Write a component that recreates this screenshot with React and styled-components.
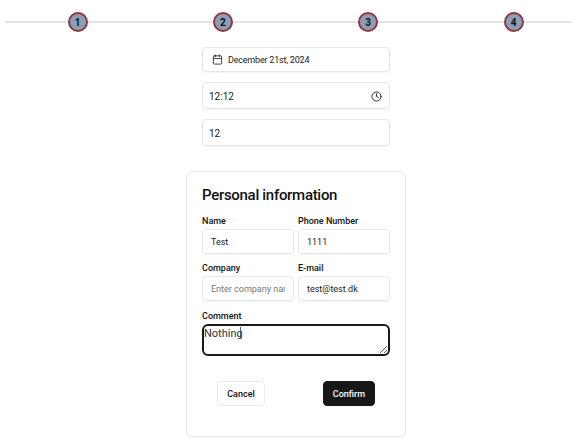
import React from 'react';
import styled, { createGlobalStyle } from 'styled-components';
import { Calendar, Clock } from 'lucide-react';

const GlobalStyle = createGlobalStyle`
  html, body {
    margin: 0;
    padding: 0;
    background: #ffffff;
    font-family: Roboto, "Open Sans", sans-serif;
    color: #111111;
  }
  * {
    box-sizing: border-box;
  }
`;

const Page = styled.div`
  width: 578px;
  height: 444px;
  overflow: hidden;
  padding-top: 12px;
`;

const Stepper = styled.div`
  position: relative;
  display: grid;
  grid-template-columns: repeat(4, 145.3px);
  align-items: center;
  width: 567px;
  margin-left: 5px;
  height: 20px;

  &::before {
    content: '';
    position: absolute;
    left: 0;
    right: 0;
    top: 9px;
    height: 2px;
    background: #e2e2e8;
  }
`;

const Step = styled.div`
  position: relative;
  justify-self: center;
  width: 20px;
  height: 20px;
  border-radius: 50%;
  background: #8d9db6;
  border: 2px solid #8c3a3f;
  display: flex;
  align-items: center;
  justify-content: center;
  font-size: 10px;
  font-weight: 700;
  color: #111111;
`;

const Fields = styled.div`
  width: 188px;
  margin: 15px 0 0 202px;
  display: flex;
  flex-direction: column;
  gap: 10px;
`;

const DateButton = styled.button`
  height: 25px;
  display: flex;
  align-items: center;
  gap: 5px;
  padding: 0 9px;
  background: #ffffff;
  border: 1px solid #e7e7ea;
  border-radius: 4px;
  box-shadow: 0 1px 1px rgba(0, 0, 0, 0.04);
  font-family: inherit;
  font-size: 9px;
  letter-spacing: -0.2px;
  color: #222222;
`;

const TimeField = styled.div`
  height: 27px;
  display: flex;
  align-items: center;
  justify-content: space-between;
  padding: 1px 7px 0 6px;
  border: 1px solid #e7e7ea;
  border-radius: 4px;
  box-shadow: 0 1px 1px rgba(0, 0, 0, 0.04);
  color: #222222;
`;

const Input = styled.input`
  width: 100%;
  height: ${props => props.$height || 25}px;
  padding: 1px ${props => props.$pad || 8}px 0;
  border: 1px solid #e7e7ea;
  border-radius: 4px;
  box-shadow: 0 1px 1px rgba(0, 0, 0, 0.04);
  background: #ffffff;
  font-family: inherit;
  font-size: ${props => props.$size || 9}px;
  color: #222222;
  outline: none;

  &::placeholder {
    color: #777777;
  }
`;

const BareInput = styled.input`
  width: 100px;
  border: none;
  outline: none;
  padding: 0;
  font-family: inherit;
  font-size: 10px;
  color: #222222;
`;

const Card = styled.div`
  width: 220px;
  height: 266px;
  margin: 25px 0 0 186px;
  padding: 13px 15px 0;
  border: 1px solid #e8e8eb;
  border-radius: 6px;
  box-shadow: 0 1px 2px rgba(0, 0, 0, 0.05);
`;

const Title = styled.h2`
  margin: 0 0 9px;
  font-size: 15px;
  line-height: 20px;
  font-weight: 500;
  letter-spacing: -0.3px;
  color: #111111;
`;

const FormGrid = styled.div`
  display: grid;
  grid-template-columns: 92px 92px;
  column-gap: 4px;
  row-gap: 7px;
`;

const Group = styled.div`
  position: relative;
  display: flex;
  flex-direction: column;
  grid-column: ${props => (props.$wide ? '1 / -1' : 'auto')};
  margin-top: ${props => (props.$wide ? 1 : 0)}px;
`;

const Label = styled.label`
  font-size: 9px;
  line-height: 15px;
  font-weight: 500;
  color: #111111;
`;

const TextArea = styled.textarea`
  width: 100%;
  height: 32px;
  padding: 1px 0 0;
  border: 2px solid #1a1a1a;
  border-radius: 6px;
  background: #ffffff;
  font-family: inherit;
  font-size: 11px;
  line-height: 13px;
  color: #333333;
  outline: none;
`;

const Caret = styled.span`
  position: absolute;
  left: 38px;
  top: 18px;
  width: 1px;
  height: 12px;
  background: #555555;
`;

const Actions = styled.div`
  display: flex;
  justify-content: space-between;
  margin-top: 25px;
  padding: 0 15px;
`;

const Button = styled.button`
  height: 25px;
  width: ${props => (props.$primary ? 52 : 48)}px;
  border-radius: 4px;
  font-family: inherit;
  font-size: 9px;
  font-weight: 500;
  border: 1px solid ${props => (props.$primary ? '#171717' : '#eaeaec')};
  background: ${props => (props.$primary ? '#171717' : '#ffffff')};
  color: ${props => (props.$primary ? '#ffffff' : '#111111')};
`;

const App = () => (
  <Page>
    <GlobalStyle />
    <Stepper>
      {[1, 2, 3, 4].map(n => (
        <Step key={n}>{n}</Step>
      ))}
    </Stepper>
    <Fields>
      <DateButton type="button">
        <Calendar size={11} strokeWidth={1.8} />
        December 21st, 2024
      </DateButton>
      <TimeField>
        <BareInput defaultValue="12:12" />
        <Clock size={11} strokeWidth={2} />
      </TimeField>
      <Input $height={27} $size={10} $pad={6} defaultValue="12" />
    </Fields>
    <Card>
      <Title>Personal information</Title>
      <FormGrid>
        <Group>
          <Label>Name</Label>
          <Input defaultValue="Test" />
        </Group>
        <Group>
          <Label>Phone Number</Label>
          <Input defaultValue="1111" />
        </Group>
        <Group>
          <Label>Company</Label>
          <Input placeholder="Enter company name" />
        </Group>
        <Group>
          <Label>E-mail</Label>
          <Input defaultValue="test@test.dk" />
        </Group>
        <Group $wide>
          <Label>Comment</Label>
          <TextArea defaultValue="Nothing" />
          <Caret />
        </Group>
      </FormGrid>
      <Actions>
        <Button type="button">Cancel</Button>
        <Button type="button" $primary>Confirm</Button>
      </Actions>
    </Card>
  </Page>
);

export default App;
